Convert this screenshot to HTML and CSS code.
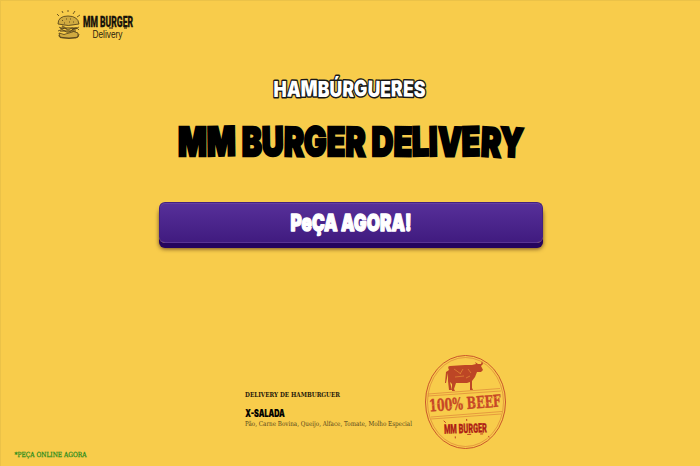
FILE: index.html
```
<!DOCTYPE html>
<html lang="pt-BR">
<head>
<meta charset="utf-8">
<title>MM Burger Delivery</title>
<link rel="stylesheet" href="styles.css">
</head>
<body>
<header class="header">
  <svg class="logo" viewBox="0 0 80 34" width="80" height="34">
    <g class="burger-art">
      <path class="bun" d="M2 14Q2 6 12 6T23 14Q12 17 2 14ZM3 23q5 3 10 0t9 0v4q-9 3-18 0Z"/>
      <path d="M3 17l3 2 3-1 3 2 4-2 3 1 4-2M2 21q4-3 7 0t7-1 7 0M3 25v1q0 2 4 2h13q3-1 3-4"/>
      <path class="thick" d="M4 18h17M4 21h16M6 16l5 3M16 20l5-2"/>
      <path d="M6 11l1-1M10 9h1M14 9h1M17 12h1M8 13h1M13 12h1M3 6L1 4M7 3L6 1M12 2V0M17 4l2-3M21 7l3-2"/>
    </g>
    <text class="logo-name" x="27" y="16.500" textLength="50" lengthAdjust="spacingAndGlyphs">MM BURGER</text>
    <path class="logo-mark" d="M53 18h4M68 18h3"/>
    <text class="logo-sub" x="36.500" y="28" textLength="30" lengthAdjust="spacingAndGlyphs">Delivery</text>
  </svg>
</header>
<main class="hero">
  <h2 class="kicker">
    <svg viewBox="0 0 164 30" width="164" height="30">
      <text class="kicker-text" x="4.500" y="22.500" textLength="152" lengthAdjust="spacingAndGlyphs" rotate="0 2 -1 0 0 2 -3 2 0 -1 1 0">HAMBÚRGUERES</text>
    </svg>
  </h2>
  <h1 class="title">
    <svg viewBox="0 0 360 46" width="360" height="46">
      <text class="title-text" x="7" y="37" textLength="345" lengthAdjust="spacingAndGlyphs" rotate="0 -1 0 0 -1 1 -1 0 1 0 0 1 -1 -1 1 -1 3">MM BURGER DELIVERY</text>
    </svg>
  </h1>
  <a class="cta" href="#pedido">
    <svg viewBox="0 0 136 36" width="136" height="36">
      <text class="cta-text" x="7.500" y="26" textLength="121" lengthAdjust="spacingAndGlyphs">PeÇA AGORA!</text>
    </svg>
  </a>
</main>
<section class="details">
  <div class="product">
    <svg viewBox="0 0 172 40" width="172" height="40">
      <text class="eyebrow" x="0" y="7.500" textLength="95" lengthAdjust="spacingAndGlyphs">DELIVERY DE HAMBURGUER</text>
      <text class="product-name" x="0.300" y="28" textLength="39.500" lengthAdjust="spacingAndGlyphs">X-SALADA</text>
      <text class="ingredients" x="0" y="36.500" textLength="167" lengthAdjust="spacingAndGlyphs">Pão, Carne Bovina, Queijo, Alface, Tomate, Molho Especial</text>
    </svg>
  </div>
  <svg class="stamp" viewBox="0 0 83 96" width="83" height="96">
    <g class="stamp-lines">
      <ellipse cx="41.500" cy="48" rx="40" ry="46.500"/>
      <ellipse class="fine" cx="41.500" cy="48" rx="38" ry="44.500"/>
      <path d="M4 40L76 34.500M4 42L77 37M7 63L78 57.500M7 65L77 60" class="fine"/>
    </g>
    <path class="cow" d="M25 16Q23 12 26 12L41 11 48 11 52 10 51 8 54 10 57 10 58 7 59 10 57 12 59 16 57 18 53 18 51 23 48 27 48 34 49 36 46 36 46 28 43 29 32 29 31 32 30 35 31 37 28 37 28 30 26 28 28 36 25 36 24 27 24 19 22 29 21 29 22 18Z"/>
    <path class="scuffs" d="M30 15l7 5M39 15l-3 5M31 23l9-1M44 15l3 4M42 24l4-2"/>
    <g transform="rotate(-4 42 50)">
      <text class="beef" x="5" y="55" textLength="72" lengthAdjust="spacingAndGlyphs">100% BEEF</text>
      <path class="wear" d="M8 49l9-2M23 53l6-2M35 48l5 2M47 52l10-3M60 49l4 2M68 47l8-3"/>
    </g>
    <g transform="rotate(-2 42 75)">
      <text class="stamp-name" x="20" y="79" textLength="43" lengthAdjust="spacingAndGlyphs">MM BURGER</text>
      <path class="stamp-mark" d="M43 80.500h4M56 80.500h3M22 68l-2-2M43 67v-2M31 82v2M64 83l1 1"/>
    </g>
  </svg>
</section>
<footer class="footer">
  <svg viewBox="0 0 80 12" width="80" height="12">
    <text class="footer-text" x="0.500" y="7.300" textLength="72" lengthAdjust="spacingAndGlyphs">*PEÇA ONLINE AGORA</text>
  </svg>
</footer>
</body>
</html>
```
FILE: styles.css
```
* { box-sizing: border-box; }
body {
  margin: 0;
  height: 466px;
  overflow: hidden;
  display: flex;
  flex-direction: column;
  background: #f8cc4b;
  border-top: 1px solid #ebc248;
  border-left: 1px solid #ebc248;
}
svg { display: block; overflow: visible; }
.header { height: 73px; padding: 9px 0 0 55px; }
.burger-art { fill: none; stroke: #4b3b16; stroke-width: .8; }
.burger-art .bun { fill: #d0aa40; }
.burger-art .thick { stroke-width: 1.5; opacity: .65; }
.logo-name { font: 900 14px "Roboto", sans-serif; fill: #17130a; stroke: #17130a; stroke-width: .3; }
.logo-mark { stroke: #17130a; stroke-width: 1; }
.logo-sub { font: 10px "Liberation Sans", sans-serif; fill: #2b220c; }
.hero { height: 280px; display: flex; flex-direction: column; align-items: center; }
.kicker, .title { margin: 0; }
.kicker { height: 45px; }
.kicker-text { font: 900 22px "Inter", sans-serif; fill: #fff; stroke: #181818; stroke-width: 3; stroke-linejoin: round; paint-order: stroke; }
.title { height: 83px; }
.title-text { font: 900 40px "Inter", sans-serif; fill: #000; stroke: #000; stroke-width: 2.400; }
.cta {
  width: 384px;
  height: 41px;
  display: flex;
  align-items: center;
  justify-content: center;
  background: linear-gradient(#57309a, #401b7f);
  border: 1px solid #43217f;
  border-bottom-color: #5a3594;
  border-radius: 6px;
  box-shadow: inset 0 1px #6540a3, 0 5px #25045d, 0 6px 4px rgba(65, 35, 20, .75);
}
.cta-text { font: 900 23px "Inter", sans-serif; fill: #fff; stroke: #fff; stroke-width: 1.400; stroke-linejoin: round; }
.details { height: 96px; display: flex; padding-left: 244px; gap: 7px; }
.product { padding-top: 35px; }
.eyebrow { font: bold 6.800px "DejaVu Serif", serif; fill: #28200a; }
.product-name { font: 900 10px "Inter", sans-serif; fill: #000; stroke: #000; stroke-width: .2; }
.ingredients { font: 6.800px "DejaVu Serif", serif; fill: #54451a; }
.stamp-lines { fill: none; stroke: #c9552b; stroke-width: 1; }
.stamp-lines .fine { stroke-width: .6; opacity: .7; }
.cow { fill: #bd4625; }
.scuffs { fill: none; stroke: #df8434; stroke-width: .8; }
.beef { font: bold 16.500px "DejaVu Serif", serif; fill: #c74626; stroke: #c74626; stroke-width: .4; }
.wear { stroke: #eca840; stroke-width: .6; opacity: .8; }
.stamp-name { font: 900 13px "Roboto", sans-serif; fill: #ae1e16; stroke: #ae1e16; stroke-width: .3; }
.stamp-mark { stroke: #ae1e16; stroke-width: .8; }
.footer { padding-left: 13px; }
.footer-text { font: 500 7px "DejaVu Serif", serif; fill: #278b1b; stroke: #278b1b; stroke-width: .25; }
```
